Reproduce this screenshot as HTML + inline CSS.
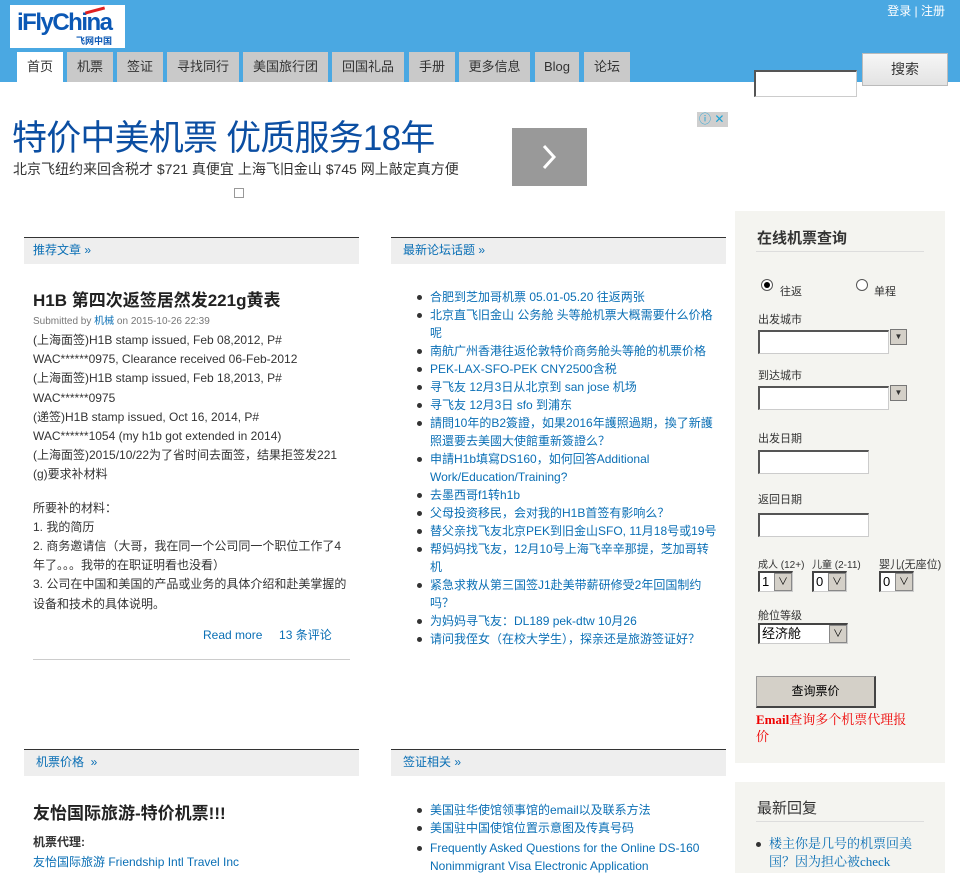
<!DOCTYPE html>
<html><head><meta charset="utf-8"><style>
*{margin:0;padding:0;box-sizing:border-box}
body{width:960px;height:873px;overflow:hidden;background:#fff;font-family:"Liberation Sans","Noto Sans CJK SC",sans-serif;font-size:12px;color:#333;position:relative}
a{color:#0a6fb5;text-decoration:none}
.abs{position:absolute}
#hdr{position:absolute;left:0;top:0;width:960px;height:82px;background:#4aa8e2}
.tab{position:absolute;top:52px;height:30px;background:#c9c9c9;color:#333;font-size:13px;text-align:center;line-height:30px}
.bh{position:absolute;height:27px;background:#eee;border-top:1px solid #333;padding-left:9px;line-height:25px;font-size:12px}
.side{position:absolute;background:#f4f4f0}
.inp{position:absolute;background:#fff;border:1px solid #ccc;border-top:2px solid #555;border-left:2px solid #555}
.sel{position:absolute;background:#fff;border:1px solid #ccc;border-top:2px solid #444;border-left:2px solid #444;font-size:13px;line-height:18px;padding-left:2px;color:#000}
.sel i{position:absolute;right:0;top:0;width:18px;height:100%;background:#d4d0c8;border:1px solid #888;font-style:normal;font-size:10px;text-align:center}
ul.f{position:absolute;list-style:none;font-size:12px;line-height:18px}
ul.f li{position:relative;padding-left:0}
ul.f li:before{content:"";position:absolute;left:-13px;top:7px;width:5px;height:5px;border-radius:50%;background:#333}
.lab{position:absolute;font-size:11px;color:#333}
.t{position:absolute;white-space:nowrap}
</style></head><body>
<div id="hdr"></div>
<div class="abs" style="left:10px;top:5px;width:115px;height:43px;background:#fff"></div>
<div class="abs" style="left:17px;top:9px;font:bold 24px 'Liberation Sans',sans-serif;color:#0b58b5;letter-spacing:-1.5px">iFlyChina</div>
<div class="abs" style="left:76px;top:34px;font-size:9px;color:#0b58b5;font-weight:bold">飞网中国</div>
<div class="abs" style="left:85px;top:9px;width:20px;height:3px;background:#e02020;transform:rotate(-15deg)"></div>
<div class="t" style="right:15px;top:2px;color:#fff;font-size:12px">登录 | 注册</div>
<div class="tab" style="left:17px;width:46px;background:#fff">首页</div>
<div class="tab" style="left:67px;width:46px">机票</div>
<div class="tab" style="left:117px;width:46px">签证</div>
<div class="tab" style="left:167px;width:72px">寻找同行</div>
<div class="tab" style="left:243px;width:85px">美国旅行团</div>
<div class="tab" style="left:332px;width:72px">回国礼品</div>
<div class="tab" style="left:409px;width:46px">手册</div>
<div class="tab" style="left:459px;width:71px">更多信息</div>
<div class="tab" style="left:535px;width:44px">Blog</div>
<div class="tab" style="left:584px;width:46px">论坛</div>
<div class="inp" style="left:754px;top:70px;width:103px;height:27px;border-width:1px;border-top:2px solid #555;border-left:2px solid #555"></div>
<div class="abs" style="left:862px;top:53px;width:86px;height:33px;background:linear-gradient(#f6f6f6,#e3e3e3);border:1px solid #bbb;text-align:center;line-height:31px;font-size:14px;color:#333">搜索</div>

<div class="t" style="left:12px;top:110px;font-size:35px;color:#0b4ea2;letter-spacing:-0.8px">特价中美机票 优质服务18年</div>
<div class="t" style="left:13px;top:159px;font-size:14px;color:#333">北京飞纽约来回含税才 $721 真便宜 上海飞旧金山 $745 网上敲定真方便</div>
<div class="abs" style="left:512px;top:128px;width:75px;height:58px;background:#999"></div>
<svg class="abs" style="left:538px;top:142px" width="22" height="30"><path d="M6 4 L16 15 L6 26" stroke="#fff" stroke-width="3" fill="none"/></svg>
<div class="abs" style="left:234px;top:188px;width:10px;height:10px;border:1px solid #999"></div>
<div class="abs" style="left:697px;top:112px;width:31px;height:15px;background:#cfcfcf;color:#1aa3d6;font-size:12px;line-height:14px;padding-left:2px">ⓘ ✕</div>

<!-- left col -->
<div class="bh" style="left:24px;top:237px;width:335px"><a>推荐文章 »</a></div>
<div class="t" style="left:33px;top:286px;font-size:17px;font-weight:bold;color:#222">H1B 第四次返签居然发221g黄表</div>
<div class="t" style="left:33px;top:312px;font-size:10px;color:#777">Submitted by <a>机械</a> on 2015-10-26 22:39</div>
<div class="abs" style="left:33px;top:331px;width:320px;font-size:12px;line-height:19.2px;color:#333">
(上海面签)H1B stamp issued, Feb 08,2012, P#<br>WAC******0975, Clearance received 06-Feb-2012<br>(上海面签)H1B stamp issued, Feb 18,2013, P#<br>WAC******0975<br>(递签)H1B stamp issued, Oct 16, 2014, P#<br>WAC******1054 (my h1b got extended in 2014)<br>(上海面签)2015/10/22为了省时间去面签，结果拒签发221<br>(g)要求补材料<div style="height:14px"></div>所要补的材料：<br>1. 我的简历<br>2. 商务邀请信（大哥，我在同一个公司同一个职位工作了4<br>年了。。。我带的在职证明看也没看）<br>3. 公司在中国和美国的产品或业务的具体介绍和赴美掌握的<br>设备和技术的具体说明。</div>
<div class="t" style="left:203px;top:626px;font-size:12px"><a>Read more</a>&nbsp;&nbsp;&nbsp;&nbsp;&nbsp;<a>13 条评论</a></div>
<div class="abs" style="left:33px;top:659px;width:317px;height:1px;background:#ccc"></div>

<!-- middle col -->
<div class="bh" style="left:391px;top:237px;width:335px;padding-left:12px"><a>最新论坛话题 »</a></div>
<ul class="f" style="left:430px;top:288px;width:290px">
<li><a>合肥到芝加哥机票 05.01-05.20 往返两张</a></li>
<li><a>北京直飞旧金山 公务舱 头等舱机票大概需要什么价格呢</a></li>
<li><a>南航广州香港往返伦敦特价商务舱头等舱的机票价格</a></li>
<li><a>PEK-LAX-SFO-PEK CNY2500含税</a></li>
<li><a>寻飞友 12月3日从北京到 san jose 机场</a></li>
<li><a>寻飞友 12月3日 sfo 到浦东</a></li>
<li><a>請問10年的B2簽證，如果2016年護照過期，換了新護照還要去美國大使館重新簽證么？</a></li>
<li><a>申請H1b填寫DS160，如何回答Additional Work/Education/Training?</a></li>
<li><a>去墨西哥f1转h1b</a></li>
<li><a>父母投资移民，会对我的H1B首签有影响么？</a></li>
<li><a>替父亲找飞友北京PEK到旧金山SFO, 11月18号或19号</a></li>
<li><a>帮妈妈找飞友，12月10号上海飞辛辛那提，芝加哥转机</a></li>
<li><a>紧急求救从第三国签J1赴美带薪研修受2年回国制约吗？</a></li>
<li><a>为妈妈寻飞友：DL189 pek-dtw 10月26</a></li>
<li><a>请问我侄女（在校大学生），探亲还是旅游签证好？</a></li>
</ul>

<!-- sidebar -->
<div class="side" style="left:735px;top:211px;width:210px;height:552px"></div>
<div class="t" style="left:757px;top:227px;font-size:15px;font-weight:bold;color:#333">在线机票查询</div>
<div class="abs" style="left:756px;top:251px;width:168px;height:1px;background:#ddd"></div>
<div class="abs" style="left:761px;top:279px;width:12px;height:12px;border-radius:50%;border:1px solid #555;background:#fff"><div style="margin:2px;width:6px;height:6px;border-radius:50%;background:#000"></div></div>
<div class="lab" style="left:780px;top:283px">往返</div>
<div class="abs" style="left:856px;top:279px;width:12px;height:12px;border-radius:50%;border:1px solid #555;background:#fff"></div>
<div class="lab" style="left:874px;top:283px">单程</div>
<div class="lab" style="left:758px;top:311px">出发城市</div>
<div class="inp" style="left:758px;top:330px;width:131px;height:24px"></div>
<div class="abs" style="left:890px;top:329px;width:17px;height:16px;background:#d4d0c8;border:1px solid #777;font-size:8px;text-align:center;line-height:14px">▼</div>
<div class="lab" style="left:758px;top:367px">到达城市</div>
<div class="inp" style="left:758px;top:386px;width:131px;height:24px"></div>
<div class="abs" style="left:890px;top:385px;width:17px;height:16px;background:#d4d0c8;border:1px solid #777;font-size:8px;text-align:center;line-height:14px">▼</div>
<div class="lab" style="left:758px;top:430px">出发日期</div>
<div class="inp" style="left:758px;top:450px;width:111px;height:24px"></div>
<div class="lab" style="left:758px;top:491px">返回日期</div>
<div class="inp" style="left:758px;top:513px;width:111px;height:24px"></div>
<div class="lab" style="left:758px;top:556px;font-size:10px">成人 (12+)</div>
<div class="lab" style="left:812px;top:556px;font-size:10px">儿童 (2-11)</div>
<div class="lab" style="left:879px;top:556px;font-size:11px">婴儿(无座位)</div>
<div class="sel" style="left:758px;top:571px;width:35px;height:21px">1<i>∨</i></div>
<div class="sel" style="left:812px;top:571px;width:35px;height:21px">0<i>∨</i></div>
<div class="sel" style="left:879px;top:571px;width:35px;height:21px">0<i>∨</i></div>
<div class="lab" style="left:758px;top:607px">舱位等级</div>
<div class="sel" style="left:758px;top:623px;width:90px;height:21px">经济舱<i>∨</i></div>
<div class="abs" style="left:756px;top:676px;width:120px;height:32px;background:#d4d0c8;border:1px solid #999;border-right:2px solid #444;border-bottom:2px solid #444;text-align:center;line-height:29px;font-size:12px;color:#000">查询票价</div>
<div class="abs" style="left:756px;top:711px;width:160px;font:13px/17px 'Liberation Serif','Noto Serif CJK SC',serif;color:#e00"><b>Email</b>查询多个机票代理报价</div>

<div class="side" style="left:735px;top:782px;width:210px;height:91px"></div>
<div class="t" style="left:757px;top:797px;font-size:15px;color:#333">最新回复</div>
<div class="abs" style="left:756px;top:821px;width:168px;height:1px;background:#ddd"></div>
<ul class="f" style="left:769px;top:835px;width:150px;font:13px/18px 'Liberation Serif','Noto Serif CJK SC',serif">
<li><a>楼主你是几号的机票回美国？因为担心被check</a></li></ul>

<!-- bottom -->
<div class="bh" style="left:24px;top:749px;width:335px;padding-left:12px"><a>机票价格 &nbsp;»</a></div>
<div class="t" style="left:33px;top:799px;font-size:17px;font-weight:bold;color:#222">友怡国际旅游-特价机票!!!</div>
<div class="t" style="left:33px;top:833px;font-size:12px;font-weight:bold;color:#333">机票代理:</div>
<div class="t" style="left:33px;top:853px;font-size:12px"><a>友怡国际旅游 Friendship Intl Travel Inc</a></div>
<div class="bh" style="left:391px;top:749px;width:335px;padding-left:12px"><a>签证相关 »</a></div>
<ul class="f" style="left:430px;top:801px;width:290px">
<li><a>美国驻华使馆领事馆的email以及联系方法</a></li>
<li><a>美国驻中国使馆位置示意图及传真号码</a></li>
<li style="margin-top:2px"><a>Frequently Asked Questions for the Online DS-160 Nonimmigrant Visa Electronic Application</a></li>
</ul>
</body></html>
